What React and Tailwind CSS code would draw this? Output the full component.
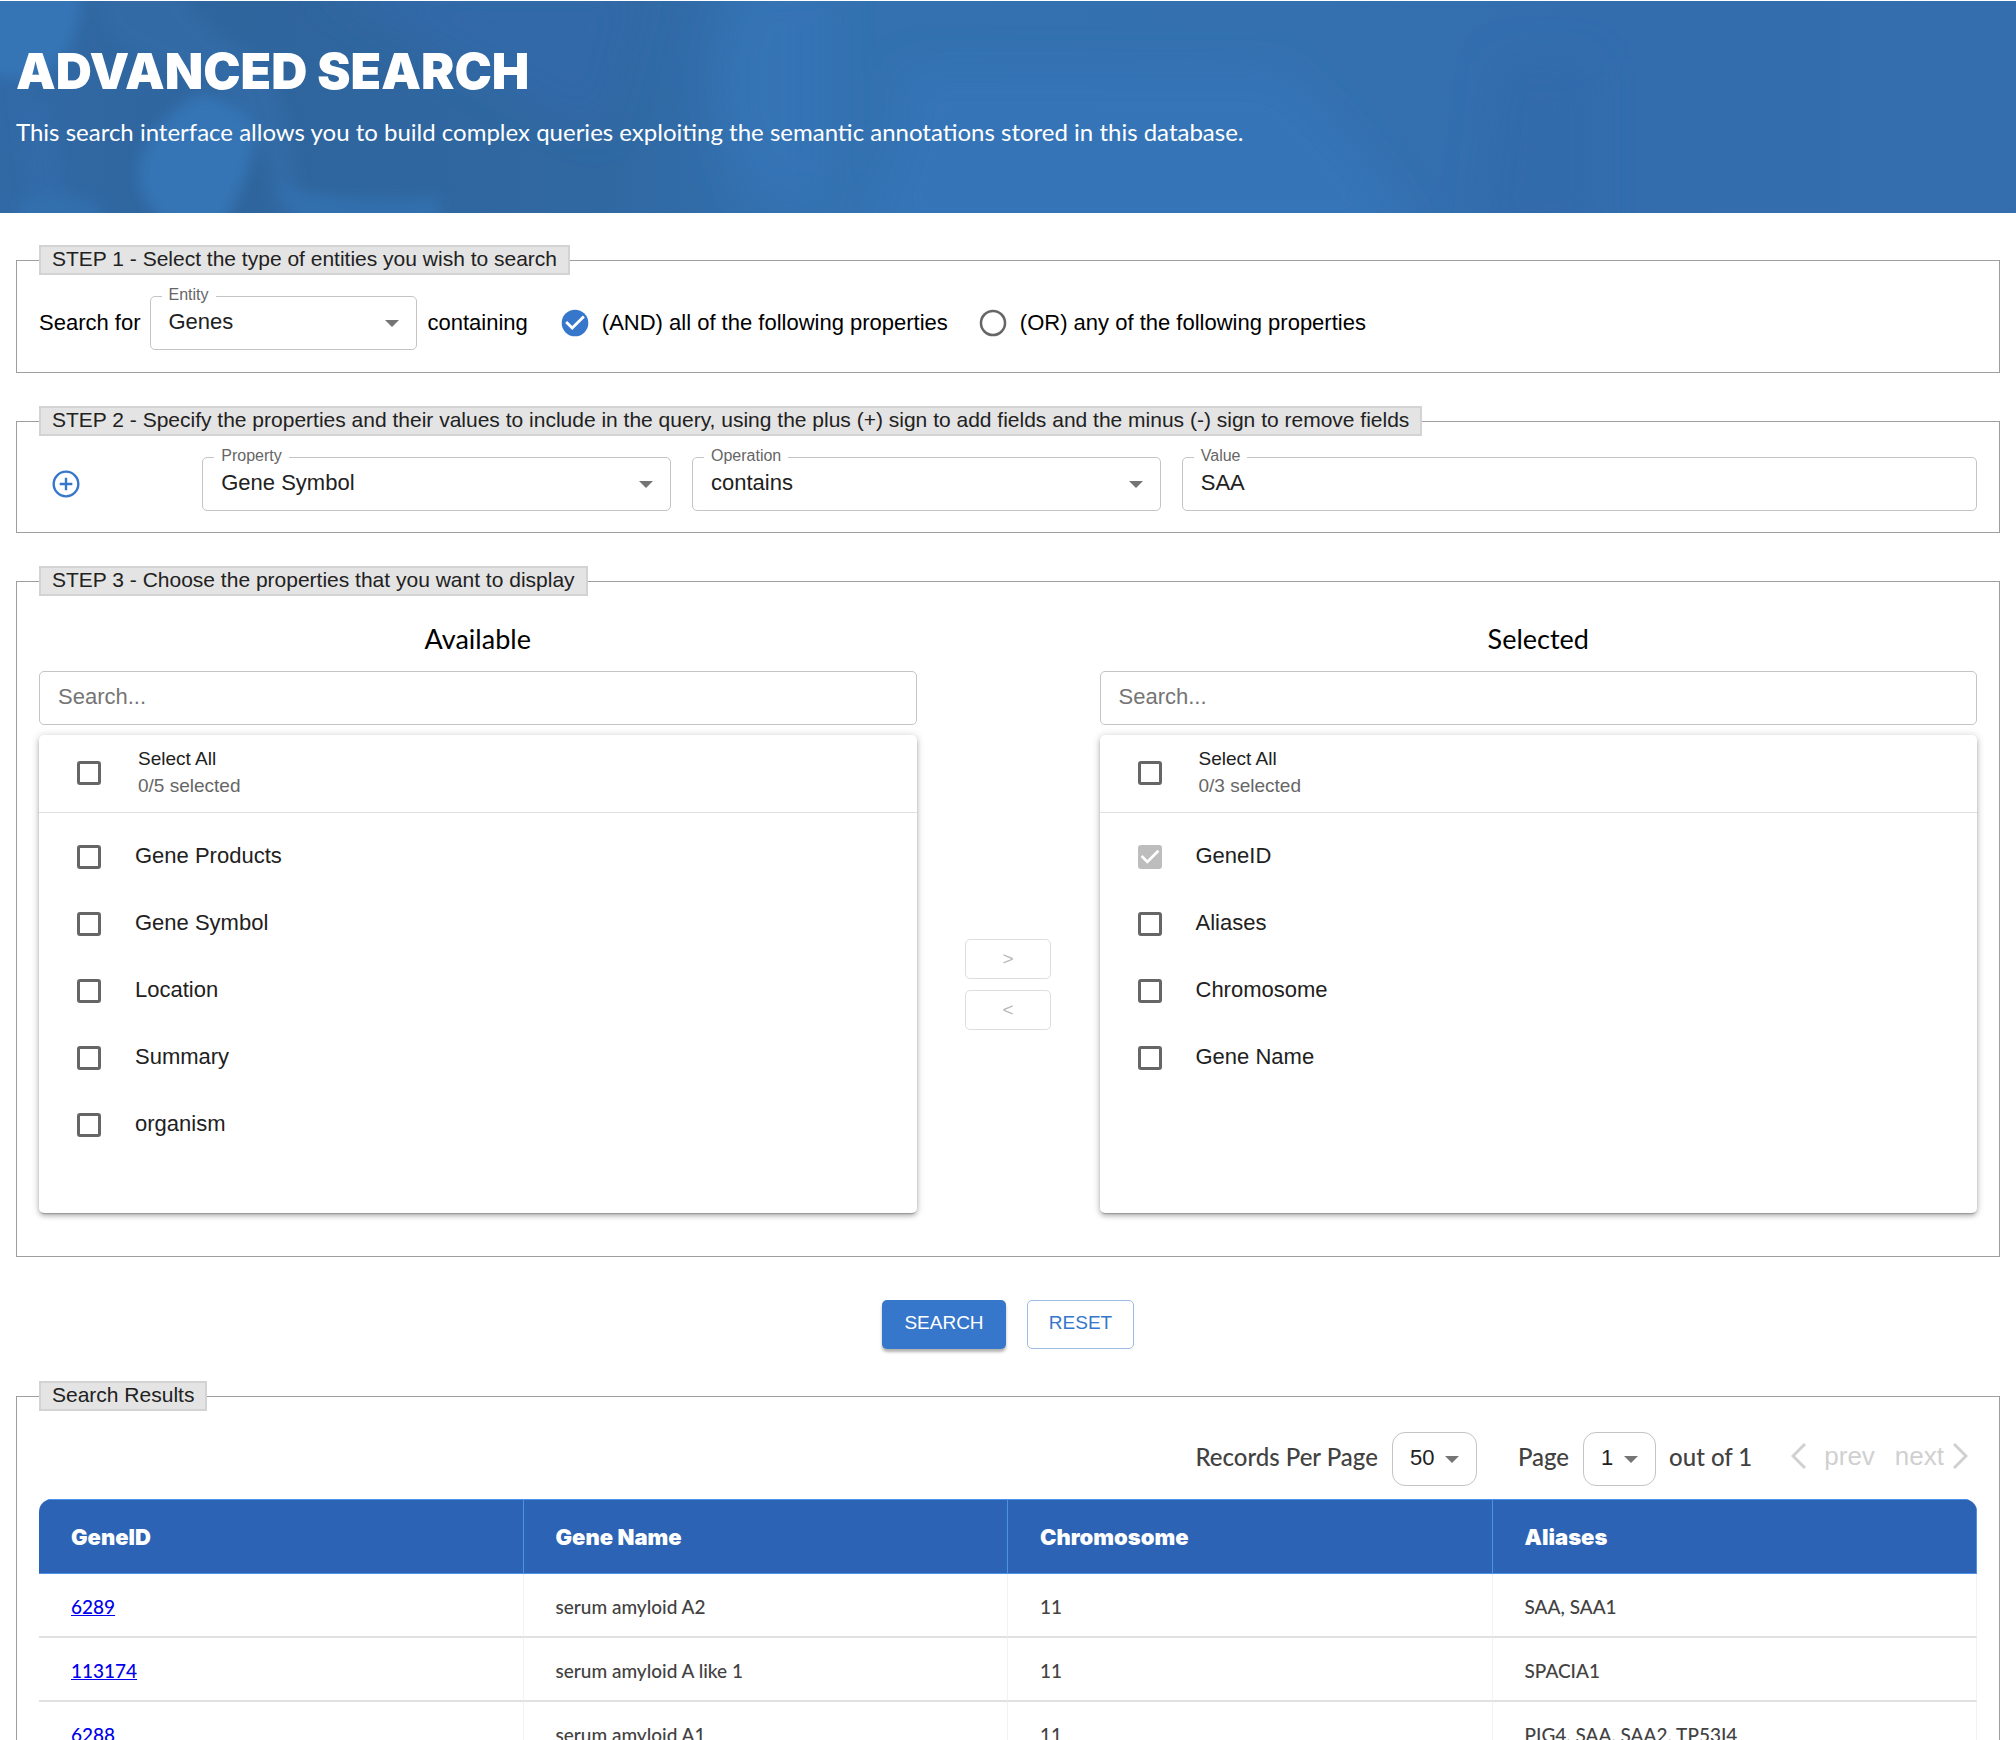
import { useState } from "react";

const BLUE = "#3677cc";

function Blobs() {
  return (
    <svg className="absolute inset-0 h-full w-full" viewBox="0 0 2016 212" preserveAspectRatio="none" aria-hidden="true">
      <defs>
        <filter id="soft" x="-30%" y="-30%" width="160%" height="160%">
          <feGaussianBlur stdDeviation="20" />
        </filter>
        <filter id="fine" x="-30%" y="-30%" width="160%" height="160%">
          <feGaussianBlur stdDeviation="7" />
        </filter>
        <linearGradient id="base" x1="0" x2="1" y1="0" y2="0">
          <stop offset="0" stopColor="#3169a5" />
          <stop offset="0.12" stopColor="#2f659d" />
          <stop offset="0.3" stopColor="#3068a2" />
          <stop offset="0.4" stopColor="#3371b0" />
          <stop offset="0.65" stopColor="#3470b0" />
          <stop offset="0.8" stopColor="#336dae" />
          <stop offset="1" stopColor="#346eaf" />
        </linearGradient>
      </defs>
      <rect width="2016" height="212" fill="url(#base)" />
      <g filter="url(#soft)">
        <path d="M320 -20H640L600 130L460 60Z" fill="#3269a8" />
        <path d="M740 -20Q690 90 750 200H830V-20Z" fill="#3673b5" />
        <path d="M850 240Q920 150 900 70H1280Q1360 140 1420 240Z" fill="#3674b7" />
        <path d="M1500 60H1590V240H1480Z" fill="#326bac" />
      </g>
      <g filter="url(#fine)">
        <path d="M-20 -20H80Q84 30 60 60T-20 70Z" fill="#3674b6" />
        <path d="M90 -10H180Q200 30 240 45Q290 70 300 212H275Q260 90 190 70T110 30Z" fill="#316aa6" />
        <path d="M15 90L50 110L70 212H30Z" fill="#316ba8" />
        <path d="M200 92Q250 104 254 130T225 222H165Q130 190 142 155T200 92Z" fill="#3674b5" />
        <path d="M275 180Q330 205 440 196V230H300Z" fill="#3370ae" />
        <path d="M20 200Q60 185 100 205V230H20Z" fill="#336fad" />
      </g>
    </svg>
  );
}

function Panel({ title, className, children }) {
  return (
    <fieldset className={`mx-4 min-w-0 border border-[#9e9e9e] px-[22px] ${className}`}>
      <legend className="h-[30px] border-2 border-[#d3d3d3] bg-[#e4e4e4] px-[11px] text-[21px] leading-[24px] text-[#212121]">
        {title}
      </legend>
      {children}
    </fieldset>
  );
}

function Caret({ className }) {
  return (
    <svg className={`pointer-events-none absolute h-[7px] w-[14px] ${className}`} viewBox="0 0 14 7" aria-hidden="true">
      <path d="M0 0H14L7 7Z" fill="#757575" />
    </svg>
  );
}

function Outlined({ id, label, className, children }) {
  return (
    <div className={`relative h-[54px] ${className}`}>
      {children}
      <label htmlFor={id} className="absolute -top-[10px] left-[12px] bg-white px-[7px] text-[16px] leading-[18px] text-[#666]">
        {label}
      </label>
    </div>
  );
}

const FIELD =
  "h-[54px] w-full appearance-none rounded-[5px] border border-[#c4c4c4] bg-white px-[18px] pb-[2px] text-[22px] leading-[24px] text-[#212121] outline-none";

function SelectField({ id, label, value, className }) {
  return (
    <Outlined id={id} label={label} className={className}>
      <select id={id} className={FIELD} defaultValue={value}>
        <option>{value}</option>
      </select>
      <Caret className="right-[18px] top-[24px]" />
    </Outlined>
  );
}

function RoundRadio({ label, checked, onChange }) {
  return (
    <label className="flex items-center gap-[13px]">
      <span className="relative size-[28px]">
        <input type="radio" name="match" checked={checked} onChange={onChange} className="absolute inset-0 appearance-none" />
        <svg className="pointer-events-none size-full" viewBox="2 2 20 20" aria-hidden="true">
          {checked ? (
            <>
              <circle cx="12" cy="12" r="9.5" fill={BLUE} />
              <path d="M10 17L5 12L6.400 10.600L10 14.200L17.600 6.600L19 8Z" fill="#fff" />
            </>
          ) : (
            <circle cx="12" cy="12" r="8.600" fill="none" stroke="#666" strokeWidth="1.800" />
          )}
        </svg>
      </span>
      {label}
    </label>
  );
}

function Tick({ id, checked, disabled }) {
  return (
    <span className="relative size-[24px] shrink-0">
      <input
        id={id}
        type="checkbox"
        defaultChecked={checked}
        disabled={disabled}
        className="block size-[24px] appearance-none rounded-[3px] border-[3px] border-[#666] checked:border-[#bdbdbd] checked:bg-[#bdbdbd]"
      />
      {checked && (
        <svg className="pointer-events-none absolute inset-0 size-full" viewBox="3 3 18 18" aria-hidden="true">
          <path d="M10 17L5 12L6.410 10.590L10 14.170L17.590 6.580L19 8Z" fill="#fff" />
        </svg>
      )}
    </span>
  );
}

function TransferList({ name, count, items }) {
  return (
    <section>
      <h2 className="text-center font-['Lato',sans-serif] text-[27px] leading-[36px] text-black">{name}</h2>
      <input type="text" aria-label={`Search ${name}`} placeholder="Search..." className={`${FIELD} mt-[14px] placeholder:text-[#757575]`} />
      <div className="mt-[10px] min-h-[478px] rounded-[5px] bg-white shadow-[0_3px_1px_-2px_rgba(0,0,0,0.2),0_3px_4px_0_rgba(0,0,0,0.2),0_1px_8px_0_rgba(0,0,0,0.2)]">
        <div className="flex h-[78px] items-center gap-[37px] border-b border-[#e0e0e0] pb-[2px] pl-[38px]">
          <Tick id={`${name}-all`} />
          <label htmlFor={`${name}-all`} className="pb-[2px] text-[19px] leading-[27px] text-[#212121]">
            Select All
            <span className="block text-[#666]">{count}</span>
          </label>
        </div>
        <ul className="pt-[10px]">
          {items.map((it) => (
            <li key={it.name} className="flex h-[67px] items-center gap-[34px] pl-[38px]">
              <Tick id={`${name}-${it.name}`} checked={it.checked} disabled={it.checked} />
              <label htmlFor={`${name}-${it.name}`} className="pb-[2px] text-[22px] leading-[32px] text-[#212121]">
                {it.name}
              </label>
            </li>
          ))}
        </ul>
      </div>
    </section>
  );
}

function Pager({ id, value, className }) {
  return (
    <div className={`relative h-[54px] ${className}`}>
      <select id={id} defaultValue={value} className="h-full w-full appearance-none rounded-[13px] border border-[#c4c4c4] bg-white pl-[17px] pb-[2px] font-['Liberation_Sans',Arial,sans-serif] text-[22px] text-[#212121]">
        <option>{value}</option>
      </select>
      <Caret className="right-[18px] top-[24px]" />
    </div>
  );
}

const ROWS = [
  ["6289", "serum amyloid A2", "11", "SAA, SAA1"],
  ["113174", "serum amyloid A like 1", "11", "SPACIA1"],
  ["6288", "serum amyloid A1", "11", "PIG4, SAA, SAA2, TP53I4"],
];

const MOVE = "h-[40px] w-[86px] rounded-[5px] border border-[#dedede] text-[19px] leading-[20px] text-[#b8b8b8]";

export default function App() {
  const [mode, setMode] = useState("and");
  return (
    <div className="h-screen overflow-hidden bg-white pt-px font-['Liberation_Sans',Arial,sans-serif] text-[22px] leading-[24px] text-black">
      <header className="relative h-[212px] px-4 pt-[40px] text-white">
        <Blobs />
        <h1 className="relative font-['Inter',sans-serif] text-[50px] font-black leading-[60px]">ADVANCED SEARCH</h1>
        <p className="relative mt-[13px] font-['Lato',sans-serif] text-[24px] leading-[36px]">
          This search interface allows you to build complex queries exploiting the semantic annotations stored in this database.
        </p>
      </header>

      <Panel title="STEP 1 - Select the type of entities you wish to search" className="mt-[32px] h-[128px] pt-[21px]">
        <div className="flex items-center">
          <span>Search for</span>
          <SelectField id="entity" label="Entity" value="Genes" className="ml-[9px] w-[267px]" />
          <span className="ml-[11px]">containing</span>
          <div className="ml-[33px] flex gap-[31px]">
            <RoundRadio label="(AND) all of the following properties" checked={mode === "and"} onChange={() => setMode("and")} />
            <RoundRadio label="(OR) any of the following properties" checked={mode === "or"} onChange={() => setMode("or")} />
          </div>
        </div>
      </Panel>

      <Panel
        title="STEP 2 - Specify the properties and their values to include in the query, using the plus (+) sign to add fields and the minus (-) sign to remove fields"
        className="mt-[33px] h-[127px] pt-[21px]"
      >
        <div className="grid grid-cols-12 items-center gap-x-[21px]">
          <button type="button" aria-label="Add field" className="ml-[13px] size-[28px]">
            <svg viewBox="2 2 20 20" className="size-full" aria-hidden="true">
              <circle cx="12" cy="12" r="8.800" fill="none" stroke={BLUE} strokeWidth="1.700" />
              <path d="M12 7.500V16.500M7.500 12H16.500" stroke={BLUE} strokeWidth="1.700" />
            </svg>
          </button>
          <SelectField id="property" label="Property" value="Gene Symbol" className="col-span-3" />
          <SelectField id="operation" label="Operation" value="contains" className="col-span-3" />
          <Outlined id="value" label="Value" className="col-span-5">
            <input id="value" type="text" defaultValue="SAA" className={FIELD} />
          </Outlined>
        </div>
      </Panel>

      <Panel title="STEP 3 - Choose the properties that you want to display" className="mt-[33px] pb-[43px] pt-[25px]">
        <div className="grid grid-cols-[1fr_141px_1fr] gap-x-[21px]">
          <TransferList
            name="Available"
            count="0/5 selected"
            items={[{ name: "Gene Products" }, { name: "Gene Symbol" }, { name: "Location" }, { name: "Summary" }, { name: "organism" }]}
          />
          <div className="flex flex-col items-center justify-center gap-[11px] pt-[134px]">
            <button type="button" aria-label="Move selected right" className={MOVE}>&gt;</button>
            <button type="button" aria-label="Move selected left" className={MOVE}>&lt;</button>
          </div>
          <TransferList
            name="Selected"
            count="0/3 selected"
            items={[{ name: "GeneID", checked: true }, { name: "Aliases" }, { name: "Chromosome" }, { name: "Gene Name" }]}
          />
        </div>
      </Panel>

      <div className="mt-[43px] flex justify-center gap-[21px]">
        <button type="button" className="h-[49px] w-[124px] rounded-[5px] bg-[#3677cc] pb-[3px] text-[19px] text-white shadow-[0_3px_3px_0_rgba(0,0,0,0.3)]">SEARCH</button>
        <button type="button" className="h-[49px] w-[107px] rounded-[5px] border border-[#9bbbe5] pb-[3px] text-[19px] text-[#3677cc]">RESET</button>
      </div>

      <Panel title="Search Results" className="mt-[32px] pb-[20px] pt-[21px]">
        <div className="flex items-center justify-end pr-[9px] font-['Lato',sans-serif] text-[24px] font-medium leading-[30px] text-[#424242]">
          <label htmlFor="per-page" className="pb-[4px]">Records Per Page</label>
          <Pager id="per-page" value="50" className="ml-[14px] w-[85px]" />
          <label htmlFor="page" className="ml-[41px] pb-[4px]">Page</label>
          <Pager id="page" value="1" className="ml-[14px] w-[73px]" />
          <span className="ml-[13px] pb-[4px]">out of 1</span>
          <button type="button" disabled className="ml-[39px] flex items-center gap-[18px] pb-[6px] font-['Liberation_Sans',Arial,sans-serif] text-[26px] font-normal text-[#d0d0d0]">
            <svg className="h-[26px] w-[15px]" viewBox="0 0 15 26" fill="none" stroke="currentColor" strokeWidth="3" aria-hidden="true">
              <path d="M14 1L2 13L14 25" />
            </svg>
            prev
          </button>
          <button type="button" disabled className="ml-[20px] flex items-center gap-[9px] pb-[6px] font-['Liberation_Sans',Arial,sans-serif] text-[26px] font-normal text-[#d0d0d0]">
            next
            <svg className="h-[26px] w-[15px]" viewBox="0 0 15 26" fill="none" stroke="currentColor" strokeWidth="3" aria-hidden="true">
              <path d="M1 1L13 13L1 25" />
            </svg>
          </button>
        </div>
        <div className="mt-[13px] overflow-hidden rounded-t-[13px]">
          <table className="w-full table-fixed border-separate border-spacing-0 text-left">
            <thead>
              <tr>
                {["GeneID", "Gene Name", "Chromosome", "Aliases"].map((h) => (
                  <th key={h} scope="col" className="h-[75px] border-y border-r border-[#4c92e6] bg-[#2c63b4] px-[32px] font-['Inter',sans-serif] text-[22px] font-black text-white">
                    {h}
                  </th>
                ))}
              </tr>
            </thead>
            <tbody className="font-['Lato',sans-serif] text-[19px] font-medium text-[#424242]">
              {ROWS.map((r) => (
                <tr key={r[0]}>
                  {r.map((c, i) => (
                    <td key={i} className="h-[64px] border-b-2 border-r border-b-[#e0e0e0] border-r-[#f2f2f2] px-[32px] pt-[4px]">
                      {i === 0 ? <a href={`#${c}`} className="text-[#0000ee] underline">{c}</a> : c}
                    </td>
                  ))}
                </tr>
              ))}
            </tbody>
          </table>
        </div>
      </Panel>
    </div>
  );
}
